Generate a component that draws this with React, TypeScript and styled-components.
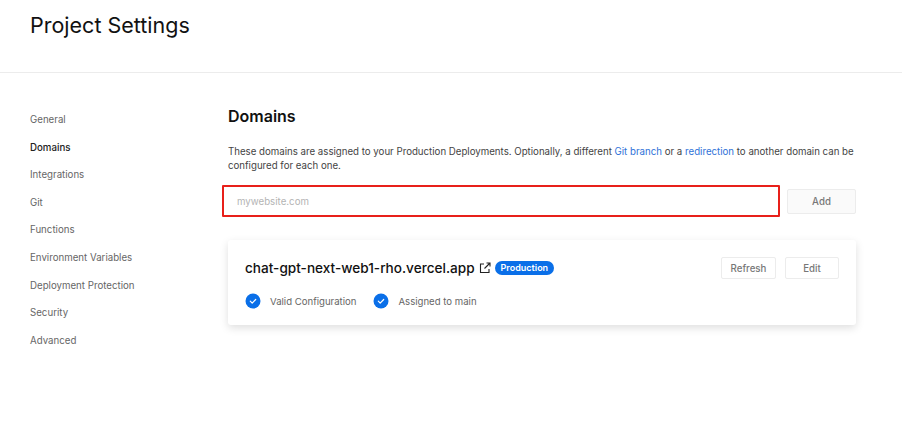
import styled, { createGlobalStyle } from "styled-components";

const GlobalStyle = createGlobalStyle`
    html, body {
        margin: 0;
        padding: 0;
        background: #ffffff;
    }
    body {
        font-family: "Inter", "Liberation Sans", sans-serif;
        color: #111111;
    }
`;

const Page = styled.div`
    width: 902px;
    height: 426px;
    overflow: hidden;
`;

const Header = styled.header`
    height: 73px;
    padding: 12px 0 0 30px;
    box-sizing: border-box;
    border-bottom: 1px solid #ececec;
`;

const PageTitle = styled.h1`
    margin: 0;
    font-size: 21.5px;
    line-height: 27px;
    font-weight: 400;
    color: #111111;
`;

const Body = styled.div`
    display: flex;
    padding-left: 30px;
    padding-top: 33px;
`;

const SideNav = styled.nav`
    width: 198px;
    padding-top: 6px;
    display: flex;
    flex-direction: column;
    gap: 12px;
`;

const NavItem = styled.a<{ $active?: boolean }>`
    display: block;
    font-size: 9.7px;
    line-height: 15.6px;
    color: ${(p) => (p.$active ? "#222222" : "#666666")};
    font-weight: ${(p) => (p.$active ? 500 : 400)};
`;

const Content = styled.main`
    width: 628px;
`;

const SectionTitle = styled.h2`
    margin: 0;
    font-size: 16px;
    line-height: 21px;
    font-weight: 600;
    color: #111111;
`;

const Description = styled.p`
    margin: 18px 0 0;
    font-size: 9.68px;
    line-height: 14px;
    color: #444444;
`;

const Link = styled.a`
    color: #2f72d8;
`;

const AddRow = styled.div`
    display: flex;
    align-items: center;
    margin-top: 12px;
    margin-left: -6px;
`;

const DomainInput = styled.input`
    width: 558px;
    height: 32px;
    box-sizing: border-box;
    padding: 1px 13px 0;
    border: 2px solid #e8201a;
    border-radius: 1px;
    outline: none;
    background: #ffffff;
    font-family: inherit;
    font-size: 9.7px;
    &::placeholder {
        color: #b4b4b4;
    }
`;

const Button = styled.button<{ $filled?: boolean; $width: number }>`
    width: ${(p) => p.$width}px;
    height: ${(p) => (p.$filled ? 25 : 22)}px;
    box-sizing: border-box;
    padding: 0;
    border: 1px solid #ececec;
    border-radius: 2px;
    background: ${(p) => (p.$filled ? "#fafafa" : "#ffffff")};
    color: #777777;
    font-family: inherit;
    font-size: 9.7px;
    font-weight: 500;
`;

const AddButton = styled(Button)`
    margin-left: 7px;
`;

const Card = styled.section`
    margin-top: 23px;
    height: 85px;
    box-sizing: border-box;
    padding: 17px 17px 0;
    border-radius: 3px;
    background: #ffffff;
    box-shadow: 0 3px 9px rgba(0, 0, 0, 0.13);
`;

const CardTop = styled.div`
    display: flex;
    align-items: center;
`;

const DomainName = styled.span`
    font-size: 13.6px;
    line-height: 22px;
    font-weight: 500;
    color: #111111;
`;

const ExternalIcon = styled.svg`
    margin-left: 3px;
    color: #222222;
`;

const Badge = styled.span`
    margin-left: 3px;
    height: 14px;
    padding: 0 6px;
    border-radius: 7px;
    background: #0a6fe8;
    color: #ffffff;
    font-size: 9px;
    line-height: 14px;
    font-weight: 600;
`;

const Actions = styled.div`
    margin-left: auto;
    display: flex;
    gap: 9px;
`;

const StatusRow = styled.div`
    display: flex;
    align-items: center;
    margin-top: 14px;
`;

const Status = styled.div`
    display: flex;
    align-items: center;
    gap: 9px;
    margin-right: 17px;
    font-size: 9.6px;
    color: #666666;
`;

const Check = () => (
    <svg width="16" height="16" viewBox="0 0 16 16">
        <circle cx="8" cy="8" r="7.5" fill="#0a6fe8" />
        <path d="M5.3 8.2l1.9 1.9 3.5-3.6" fill="none" stroke="#ffffff" strokeWidth="1.2" strokeLinecap="round" strokeLinejoin="round" />
    </svg>
);

const navItems = [
    "General",
    "Domains",
    "Integrations",
    "Git",
    "Functions",
    "Environment Variables",
    "Deployment Protection",
    "Security",
    "Advanced",
];

export default function App() {
    return (
        <Page>
            <GlobalStyle />
            <Header>
                <PageTitle>Project Settings</PageTitle>
            </Header>
            <Body>
                <SideNav>
                    {navItems.map((item) => (
                        <NavItem key={item} $active={item === "Domains"}>{item}</NavItem>
                    ))}
                </SideNav>
                <Content>
                    <SectionTitle>Domains</SectionTitle>
                    <Description>
                        These domains are assigned to your Production Deployments. Optionally, a different <Link>Git branch</Link> or a <Link>redirection</Link> to another domain can be configured for each one.
                    </Description>
                    <AddRow>
                        <DomainInput placeholder="mywebsite.com" />
                        <AddButton $filled $width={69}>Add</AddButton>
                    </AddRow>
                    <Card>
                        <CardTop>
                            <DomainName>chat-gpt-next-web1-rho.vercel.app</DomainName>
                            <ExternalIcon width="14" height="14" viewBox="0 0 14 14" fill="none" stroke="currentColor" strokeWidth="1.1">
                                <path d="M6 3H2.5v8.5H11V8" />
                                <path d="M6.5 7.5L12 2M8.5 2H12v3.5" />
                            </ExternalIcon>
                            <Badge>Production</Badge>
                            <Actions>
                                <Button $width={55}>Refresh</Button>
                                <Button $width={54}>Edit</Button>
                            </Actions>
                        </CardTop>
                        <StatusRow>
                            <Status><Check />Valid Configuration</Status>
                            <Status><Check />Assigned to main</Status>
                        </StatusRow>
                    </Card>
                </Content>
            </Body>
        </Page>
    );
}
